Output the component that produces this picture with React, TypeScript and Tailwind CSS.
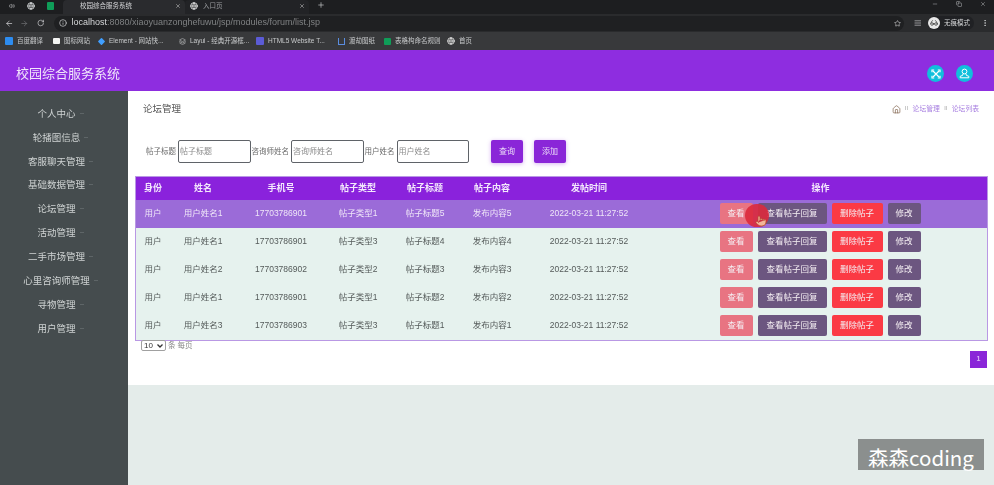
import React from "react";
import { ArrowLeft, ArrowRight, RotateCw, Info, Star, MoreVertical, Plus, X, Globe, Volume2, Minus, Copy, Home, Glasses, Layers, Pointer, AlignJustify } from "lucide-react";

const font = "font-['Liberation_Sans','Noto_Sans_CJK_SC',sans-serif]";

const menu = ["个人中心", "轮播图信息", "客服聊天管理", "基础数据管理", "论坛管理", "活动管理", "二手市场管理", "心里咨询师管理", "寻物管理", "用户管理"];
const rows = [
  ["用户", "用户姓名1", "17703786901", "帖子类型1", "帖子标题5", "发布内容5"],
  ["用户", "用户姓名1", "17703786901", "帖子类型3", "帖子标题4", "发布内容4"],
  ["用户", "用户姓名2", "17703786902", "帖子类型2", "帖子标题3", "发布内容3"],
  ["用户", "用户姓名1", "17703786901", "帖子类型1", "帖子标题2", "发布内容2"],
  ["用户", "用户姓名3", "17703786903", "帖子类型3", "帖子标题1", "发布内容1"],
];
const heads = ["身份", "姓名", "手机号", "帖子类型", "帖子标题", "帖子内容", "发帖时间", "操作"];

function Bookmark({ icon, label, className }: { icon: React.ReactNode; label: string; className: string }) {
  return (
    <div className={`flex items-center gap-[4px] shrink-0 ${className}`}>
      <div className="w-[8px] flex justify-center">{icon}</div>
      <span className="text-[6.5px] text-[#c8cacc] whitespace-nowrap">{label}</span>
    </div>
  );
}

function Chrome() {
  return (
    <div className="h-[50px] flex flex-col shrink-0">
      <div className="h-[14px] bg-[#1d1e20] flex relative pl-[9px]">
        <div className="flex items-center h-[11px] gap-[12px] text-[#c8cacc] w-[54px]">
          <Volume2 size={6} />
          <Globe size={8} strokeWidth={3} />
          <div className="w-[7px] h-[8px] bg-[#0f9d58] rounded-[1px]" />
        </div>
        <div className="w-[122px] h-[14px] bg-[#2a2b2e] rounded-t-[4px] flex items-center pl-[17px] pr-[4px] justify-between pb-[3px]">
          <span className="text-[6.5px] text-[#d4d5d7]">校园综合服务系统</span>
          <X size={6} className="text-[#d0d0d0]" />
        </div>
        <div className="w-[124px] h-[14px] flex items-center pl-[5px] pr-[4px] justify-between bg-[#222326] rounded-t-[4px] pb-[3px]">
          <div className="flex items-center gap-[5px]">
            <Globe size={8} strokeWidth={3} className="text-[#d0d0d0]" />
            <span className="text-[6.5px] text-[#9b9da0]">入口页</span>
          </div>
          <X size={6} className="text-[#d0d0d0]" />
        </div>
        <Plus size={8} className="text-[#c8cacc] ml-[8px] mt-[1px]" />
        <div className="ml-auto flex items-start gap-[18px] pr-[8px] pt-[1px] text-[#b5b7b9]">
          <Minus size={6} />
          <Copy size={6} />
          <X size={6} />
        </div>
      </div>
      <div className="h-[18px] bg-[#2a2b2d] flex items-center px-[5px] text-[#d5d6d8]">
        <ArrowLeft size={9} />
        <ArrowRight size={9} className="ml-[7px] text-[#6f7173]" />
        <RotateCw size={8} className="ml-[8px]" />
        <div className="ml-[10px] w-[850px] h-[15px] bg-[#1f2022] rounded-full flex items-center pl-[5px] pr-[3px] shrink-0">
          <Info size={8} />
          <span className="ml-[4px] text-[9px] whitespace-nowrap">
            localhost<span className="text-[#7f8183]">:8080/xiaoyuanzonghefuwu/jsp/modules/forum/list.jsp</span>
          </span>
          <Star size={7} className="ml-auto" />
        </div>
        <AlignJustify size={8} className="ml-[10px]" />
        <div className="ml-[6px] flex items-center bg-[#202124] rounded-full pr-[4px] h-[14px] shrink-0">
          <div className="w-[12px] h-[12px] rounded-full bg-[#e8e8e8] flex items-center justify-center text-[#333]">
            <Glasses size={8} />
          </div>
          <span className="ml-[4px] text-[6.5px] text-[#d5d6d8] whitespace-nowrap">无痕模式</span>
        </div>
        <MoreVertical size={8} className="ml-[7px] shrink-0" />
      </div>
      <div className="h-[18px] bg-[#38393b] flex items-center pl-[5px]">
        <Bookmark className="w-[47px]" icon={<div className="w-[8px] h-[8px] bg-[#2d8cf0] rounded-[1px]" />} label="百度翻译" />
        <Bookmark className="w-[45px]" icon={<div className="w-[7px] h-[6px] bg-[#f4f4f4] rounded-[1px]" />} label="图标网站" />
        <Bookmark className="w-[81px]" icon={<div className="w-[7px] h-[7px] bg-[#409eff] rotate-45 rounded-[1px] scale-75" />} label="Element - 网站快..." />
        <Bookmark className="w-[78px]" icon={<Layers size={7} className="text-[#c4c6c8]" />} label="Layui - 经典开源框..." />
        <Bookmark className="w-[81px]" icon={<div className="w-[8px] h-[8px] bg-[#5b5bd6] rounded-[1px]" />} label="HTML5 Website T..." />
        <Bookmark className="w-[46px]" icon={<div className="w-[7px] h-[7px] border-b border-l border-r border-[#5a8de0]" />} label="渡劫图纸" />
        <Bookmark className="w-[64px]" icon={<div className="w-[7px] h-[7px] bg-[#0f9d58] rounded-[1px]" />} label="表格构命名规则" />
        <Bookmark className="w-[30px]" icon={<Globe size={8} strokeWidth={3} className="text-[#d0d0d0]" />} label="首页" />
      </div>
    </div>
  );
}

function Cell({ children, className }: { children: React.ReactNode; className?: string }) {
  return <td className={`text-center p-0 whitespace-nowrap ${className ?? ""}`}>{children}</td>;
}

function Btn({ label, className }: { label: string; className: string }) {
  return (
    <button className={`h-[21px] rounded-[2px] text-[8.5px] text-[#f4eef2] ${className}`}>{label}</button>
  );
}

function Field({ label, placeholder }: { label: string; placeholder: string }) {
  return (
    <div className="flex items-center gap-[2px]">
      <span className="text-[7.5px] text-[#6a6a6a] whitespace-nowrap leading-none">{label}</span>
      <div className="h-[23px] w-[72.5px] border border-[#5f6368] rounded-[2px] flex items-center bg-white text-[8px] text-[#8b8b8b] pl-[1px]">
        {placeholder}
      </div>
    </div>
  );
}

function ExpandIcon() {
  return (
    <svg width="10" height="10" viewBox="0 0 10 10" fill="none" stroke="white" strokeWidth="1.2">
      <path d="M2 2l6 6M8 2L2 8" />
      <path d="M1 3.2V1h2.2M6.8 1H9v2.2M1 6.8V9h2.2M6.8 9H9V6.8" />
    </svg>
  );
}

function PersonIcon() {
  return (
    <svg width="11" height="11" viewBox="0 0 11 11" fill="none" stroke="white" strokeWidth="1">
      <circle cx="5.5" cy="3.5" r="2.4" />
      <path d="M4 6L3.6 7.4 1.2 8.3v1.5h8.6V8.3L7.4 7.4 7 6" />
    </svg>
  );
}

export default function App() {
  return (
    <div className={`relative w-[994px] h-[485px] overflow-hidden bg-[#e4ecea] ${font}`}>
      <div className="h-full flex flex-col blur-[0.35px]">
        <Chrome />
        <div className="h-[41px] bg-[#8e2de0] flex items-center justify-between pl-[16px] pr-[21px] pt-[6px] shrink-0">
          <span className="text-[13px] text-[#f1e6fb]">校园综合服务系统</span>
          <div className="flex gap-[12px]">
            <div className="w-[17px] h-[17px] rounded-full bg-[#11bfdc] flex items-center justify-center">
              <ExpandIcon />
            </div>
            <div className="w-[17px] h-[17px] rounded-full bg-[#11bfdc] flex items-center justify-center">
              <PersonIcon />
            </div>
          </div>
        </div>
        <div className="flex flex-1 min-h-0">
          <aside className="w-[128px] shrink-0 bg-[#454c4e] pt-[11px] pr-[15px] flex flex-col">
            {menu.map((m) => (
              <div key={m} className="h-[23.9px] flex items-center justify-center text-[9.5px] text-[#cfd3d3]">
                <span className="relative">
                  {m}
                  <span className="absolute right-[-8px] top-[6px] w-[4px] h-[1px] bg-[#5e6567]" />
                </span>
              </div>
            ))}
          </aside>
          <main className="flex-1 min-w-0">
            <div className="h-[294px] bg-white">
              <div className="flex items-center justify-between h-[35px] pl-[15px] pr-[15px]">
                <span className="text-[9.5px] text-[#555] mt-[2px]">论坛管理</span>
                <div className="flex items-center text-[6.8px] text-[#a77fe0] mt-[1px]">
                  <Home size={9} className="text-[#8a6f5a]" />
                  <span className="mx-[3.5px] text-[#999] text-[5px]">Ⅱ</span>
                  <span>论坛管理</span>
                  <span className="mx-[3.5px] text-[#999] text-[5px]">Ⅱ</span>
                  <span>论坛列表</span>
                </div>
              </div>
              <div className="flex items-start h-[50px] pt-[14px] pl-[18px]">
                <div className="flex items-center gap-[1px]">
                  <Field label="帖子标题" placeholder="帖子标题" />
                  <Field label="咨询师姓名" placeholder="咨询师姓名" />
                  <Field label="用户姓名" placeholder="用户姓名" />
                </div>
                <button className="ml-[22px] w-[32px] h-[23px] bg-[#8a26d8] rounded-[2px] text-[8px] text-[#ecdcf8] shadow-[0_1px_4px_rgba(138,38,216,0.35)]">查询</button>
                <button className="ml-[11px] w-[32px] h-[23px] bg-[#8a26d8] rounded-[2px] text-[8px] text-[#ecdcf8] shadow-[0_1px_4px_rgba(138,38,216,0.35)]">添加</button>
              </div>
              <div className="ml-[7px] w-[853px] border border-[#b998e4]">
                <table className="w-full table-fixed border-collapse">
                  <colgroup>
                    <col className="w-[34px]" />
                    <col className="w-[66px]" />
                    <col className="w-[90px]" />
                    <col className="w-[64px]" />
                    <col className="w-[70px]" />
                    <col className="w-[64px]" />
                    <col className="w-[130px]" />
                    <col />
                  </colgroup>
                  <thead>
                    <tr className="h-[23px] bg-[#8a22dc] text-[#f3e8fc] text-[9px] font-bold">
                      {heads.map((h) => <th key={h} className="p-0 font-bold text-center">{h}</th>)}
                    </tr>
                  </thead>
                  <tbody>
                    {rows.map((r, i) => (
                      <tr key={i} className={`h-[28px] text-[8.5px] ${i === 0 ? "bg-[#9b6bd8] text-[#efe6f8]" : "bg-[#e6f2ee] text-[#555b5a]"}`}>
                        {r.map((c, j) => <Cell key={j} className="pb-[2px]">{c}</Cell>)}
                        <Cell className="pb-[2px]">2022-03-21 11:27:52</Cell>
                        <Cell>
                          <div className="relative flex justify-center gap-[5px] mr-[1px] mb-[2px]">
                            <Btn label="查看" className="w-[33px] bg-[#e87482]" />
                            <Btn label="查看帖子回复" className="w-[69px] bg-[#6c5680]" />
                            <Btn label="删除帖子" className="w-[51px] bg-[#fb3a44]" />
                            <Btn label="修改" className="w-[33px] bg-[#6c5680]" />
                            {i === 0 && (
                              <div className="absolute left-[91px] top-[1px] w-[24px] h-[23px] rounded-full bg-[#dc2a3c]/90">
                                <Pointer size={12} strokeWidth={1.5} className="absolute left-[10px] top-[11px] text-[#b5482e] fill-[#f2b69a]" />
                              </div>
                            )}
                          </div>
                        </Cell>
                      </tr>
                    ))}
                  </tbody>
                </table>
              </div>
              <div className="flex justify-between pl-[13px] pr-[7px]">
                <div className="flex items-center h-[11px] mt-[-1px]">
                  <div className="w-[25px] h-[11px] border border-[#a0a0a0] rounded-[2px] text-[8px] text-[#333] bg-white flex items-center justify-between pl-[2px] pr-[2px] leading-none">
                    <span>10</span>
                    <svg width="6" height="4" viewBox="0 0 6 4" fill="none" stroke="#333" strokeWidth="1.3">
                      <path d="M0.5 0.5L3 3l2.5-2.5" />
                    </svg>
                  </div>
                  <span className="ml-[2px] text-[7.5px] text-[#888]">条 每页</span>
                </div>
                <div className="mt-[10px] w-[17px] h-[17px] bg-[#8a26d8] flex items-center justify-center text-[7px] text-[#d8b8f4] font-bold">1</div>
              </div>
            </div>
          </main>
        </div>
      </div>
      <div className="absolute left-[858px] top-[439px] w-[126px] h-[31px] bg-[#8b8f8e] text-white text-[20.5px] flex items-center justify-center leading-none pt-[5px] font-['Noto_Sans_CJK_SC','Noto_Sans',sans-serif]">
        森森coding
      </div>
    </div>
  );
}
